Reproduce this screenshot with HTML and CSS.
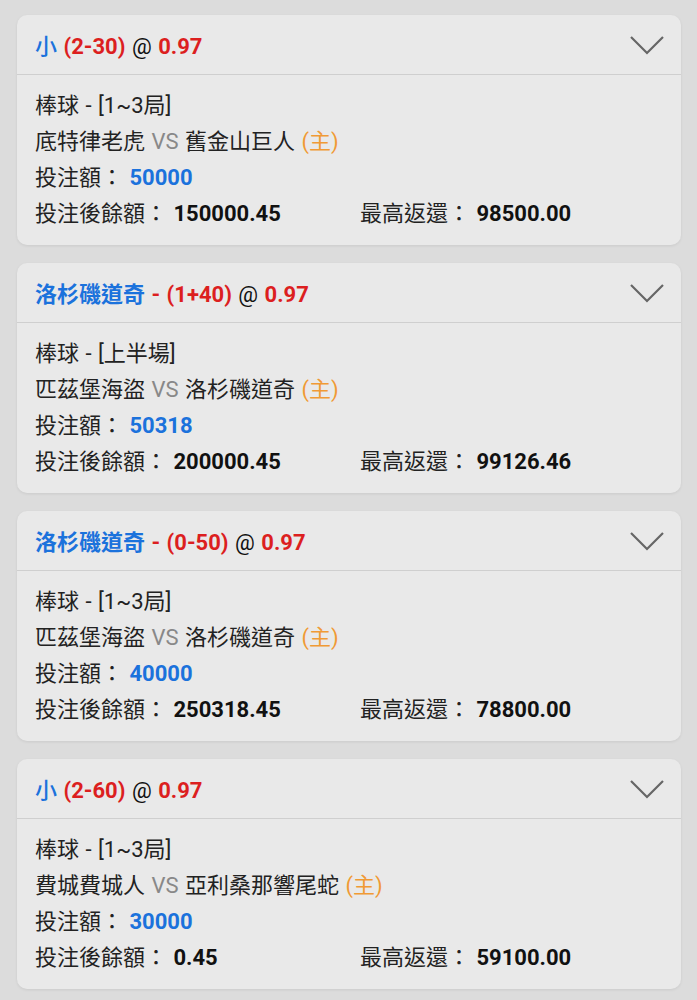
FILE: index.html
```html
<!DOCTYPE html>
<html lang="zh-Hant">
<head>
  <meta charset="UTF-8">
  <title>投注記錄</title>
  <link rel="stylesheet" href="styles.css">
</head>
<body>

  <div class="list">

    <div class="bet">
      <div class="bet-head">
        <div class="bet-title"><span class="pick">小</span> <span class="line">(2-30)</span> <span class="at">@</span> <span class="odds">0.97</span></div>
        <svg class="chevron" viewBox="0 0 34 20"><path d="M1 2 L17 18 L33 2" /></svg>
      </div>
      <div class="bet-body">
        <div>棒球 - [1~3局]</div>
        <div>底特律老虎 <span class="vs">VS</span> 舊金山巨人 <span class="home">(主)</span></div>
        <div>投注額： <span class="amount">50000</span></div>
        <div class="row">
          <div class="col">投注後餘額： <b>150000.45</b></div>
          <div>最高返還： <b>98500.00</b></div>
        </div>
      </div>
    </div>

    <div class="bet">
      <div class="bet-head">
        <div class="bet-title"><span class="pick team">洛杉磯道奇</span> <span class="line">- (1+40)</span> <span class="at">@</span> <span class="odds">0.97</span></div>
        <svg class="chevron" viewBox="0 0 34 20"><path d="M1 2 L17 18 L33 2" /></svg>
      </div>
      <div class="bet-body">
        <div>棒球 - [上半場]</div>
        <div>匹茲堡海盜 <span class="vs">VS</span> 洛杉磯道奇 <span class="home">(主)</span></div>
        <div>投注額： <span class="amount">50318</span></div>
        <div class="row">
          <div class="col">投注後餘額： <b>200000.45</b></div>
          <div>最高返還： <b>99126.46</b></div>
        </div>
      </div>
    </div>

    <div class="bet">
      <div class="bet-head">
        <div class="bet-title"><span class="pick team">洛杉磯道奇</span> <span class="line">- (0-50)</span> <span class="at">@</span> <span class="odds">0.97</span></div>
        <svg class="chevron" viewBox="0 0 34 20"><path d="M1 2 L17 18 L33 2" /></svg>
      </div>
      <div class="bet-body">
        <div>棒球 - [1~3局]</div>
        <div>匹茲堡海盜 <span class="vs">VS</span> 洛杉磯道奇 <span class="home">(主)</span></div>
        <div>投注額： <span class="amount">40000</span></div>
        <div class="row">
          <div class="col">投注後餘額： <b>250318.45</b></div>
          <div>最高返還： <b>78800.00</b></div>
        </div>
      </div>
    </div>

    <div class="bet">
      <div class="bet-head">
        <div class="bet-title"><span class="pick">小</span> <span class="line">(2-60)</span> <span class="at">@</span> <span class="odds">0.97</span></div>
        <svg class="chevron" viewBox="0 0 34 20"><path d="M1 2 L17 18 L33 2" /></svg>
      </div>
      <div class="bet-body">
        <div>棒球 - [1~3局]</div>
        <div>費城費城人 <span class="vs">VS</span> 亞利桑那響尾蛇 <span class="home">(主)</span></div>
        <div>投注額： <span class="amount">30000</span></div>
        <div class="row">
          <div class="col">投注後餘額： <b>0.45</b></div>
          <div>最高返還： <b>59100.00</b></div>
        </div>
      </div>
    </div>

  </div>

</body>
</html>
```

FILE: styles.css
```css
html, body {
  margin: 0;
  background: #dcdcdc;
}

body {
  font-family: Roboto, "Noto Sans CJK TC", sans-serif;
  color: #222;
}

.list {
  display: flex;
  flex-direction: column;
  gap: 18px;
  padding: 15px 16px 13px 17px;
}

.bet {
  background: #e9e9e9;
  border-radius: 10px;
  box-shadow: 0 1px 3px rgba(0,0,0,0.08);
}

.bet-head {
  display: flex;
  align-items: center;
  justify-content: space-between;
  height: 59px;
  padding: 0 17px 2px 18px;
  box-sizing: border-box;
  height: 60px;
  border-bottom: 1px solid #cfcfcf;
}

.bet-title {
  font-size: 22px;
  font-weight: 500;
  word-spacing: 1px;
}

.pick {
  color: #1b72dc;
}

.pick.team {
  font-weight: 700;
}

.line, .odds {
  color: #dc1f1f;
  font-weight: 700;
}

.at {
  color: #111;
  font-weight: 400;
}

.chevron {
  width: 34px;
  height: 20px;
  margin-top: 2px;
  fill: none;
  stroke: #666;
  stroke-width: 2.2;
}

.bet-body {
  padding: 13px 0 13px 18px;
  font-size: 22px;
  line-height: 36px;
  word-spacing: 1px;
}

.vs {
  color: #888;
}

.home {
  color: #f09a35;
}

.amount {
  color: #1b72dc;
  font-weight: 700;
}

.row {
  display: flex;
}

.col {
  width: 325px;
}

b {
  font-weight: 700;
  color: #111;
}
```
